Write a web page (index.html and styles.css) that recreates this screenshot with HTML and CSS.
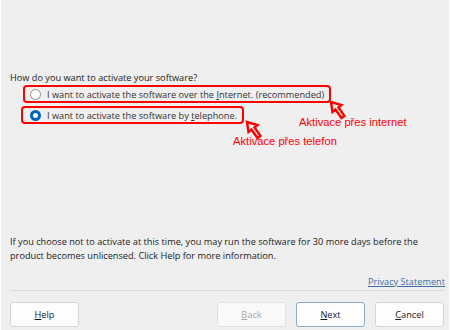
FILE: index.html
```html
<!DOCTYPE html>
<html>
<head>
<meta charset="utf-8">
<link rel="stylesheet" href="styles.css">
</head>
<body>
<div class="win">
  <div class="content">
    <p class="question">How do you want to activate your software?</p>
    <div class="options">
      <label class="opt hl hl1"><span class="radio"></span><span>I want to activate the software over the <u>I</u>nternet. (recommended)</span></label>
      <label class="opt hl hl2"><span class="radio on"></span><span>I want to activate the software by <u>t</u>elephone.</span></label>
    </div>
    <div class="spacer"></div>
    <p class="info">If you choose not to activate at this time, you may run the software for 30 more days before the product becomes unlicensed. Click Help for more information.</p>
    <div class="linkrow"><a class="link">Privacy Statement</a></div>
  </div>
  <div class="footer">
    <button class="btn"><u>H</u>elp</button>
    <div class="grow"></div>
    <button class="btn disabled"><u>B</u>ack</button>
    <button class="btn primary"><u>N</u>ext</button>
    <button class="btn"><u>C</u>ancel</button>
  </div>

  <svg class="arrow a1" width="20" height="22" viewBox="0 0 20 22"><path d="M3 3 L4.5 13 L7.5 10.5 L13.5 19 L16.5 17 L10.5 8.5 L13.5 6 Z" fill="none" stroke="#ff0000" stroke-width="2.4" stroke-linejoin="miter"/></svg>
  <svg class="arrow a2" width="20" height="22" viewBox="0 0 20 22"><path d="M3 3 L4.5 13 L7.5 10.5 L13.5 19 L16.5 17 L10.5 8.5 L13.5 6 Z" fill="none" stroke="#ff0000" stroke-width="2.4" stroke-linejoin="miter"/></svg>
  <span class="note n1">Aktivace přes internet</span>
  <span class="note n2">Aktivace přes telefon</span>
</div>
</body>
</html>
```
FILE: styles.css
```css
* { box-sizing: border-box; }
html, body { margin: 0; padding: 0; }
body { background: #ffffff; }
.win {
  position: relative;
  width: 450px;
  height: 330px;
  background: #efefef;
  border-left: 1px solid #ffffff;
  border-right: 1px solid #ffffff;
  display: flex;
  flex-direction: column;
  font-family: "Open Sans", "Noto Sans", sans-serif;
  font-size: 9.2px;
  color: #1b1b1b;
}
.content {
  flex: 1;
  display: flex;
  flex-direction: column;
  padding: 71px 4px 0 9px;
}
.question { margin: 0 0 1px 0; line-height: 13px; }
.options { display: flex; flex-direction: column; gap: 3px; margin-left: 11px; }
.opt {
  display: inline-flex;
  align-items: center;
  gap: 6px;
  height: 18px;
  align-self: flex-start;
  color: #333;
}
.hl {
  border: 2.5px solid #ff0000;
  border-radius: 4px;
}
.hl1 { padding: 0 5px 0 5px; margin-left: 2px; }
.hl2 { padding: 0 5px 0 7px; }
.radio {
  width: 11px; height: 11px;
  border-radius: 50%;
  border: 1px solid #8a8a8a;
  background: #fff;
  flex: none;
}
.radio.on {
  border: 3.5px solid #0062b8;
  background: #fff;
}
.spacer { flex: 1; }
.info { margin: 0 0 12px 0; line-height: 14px; }
.linkrow { display: flex; justify-content: flex-end; border-bottom: 1px solid #dcdcdc; padding-bottom: 2px; }
.link { color: #3c6fa8; text-decoration: underline; }
.footer {
  display: flex;
  gap: 10px;
  padding: 11px 5px 3px 9px;
}
.grow { flex: 1; }
.btn {
  width: 69px;
  height: 25px;
  background: #fdfdfd;
  border: 1px solid #d6d6d6;
  border-radius: 3px;
  font-family: inherit;
  font-size: 9.2px;
  color: #1b1b1b;
  padding: 0;
}
.btn.disabled { color: #a8a8a8; background: #f9f9f9; border-color: #e2e2e2; }
.btn.primary { border-color: #88a9c8; }
.arrow { position: absolute; }
.a1 { left: 327px; top: 99px; }
.a2 { left: 243px; top: 119px; }
.note {
  position: absolute;
  font-family: "Liberation Sans", Arial, sans-serif;
  font-size: 11.2px;
  color: #ff0000;
}
.n1 { left: 298px; top: 116px; }
.n2 { left: 232px; top: 135px; }
```
